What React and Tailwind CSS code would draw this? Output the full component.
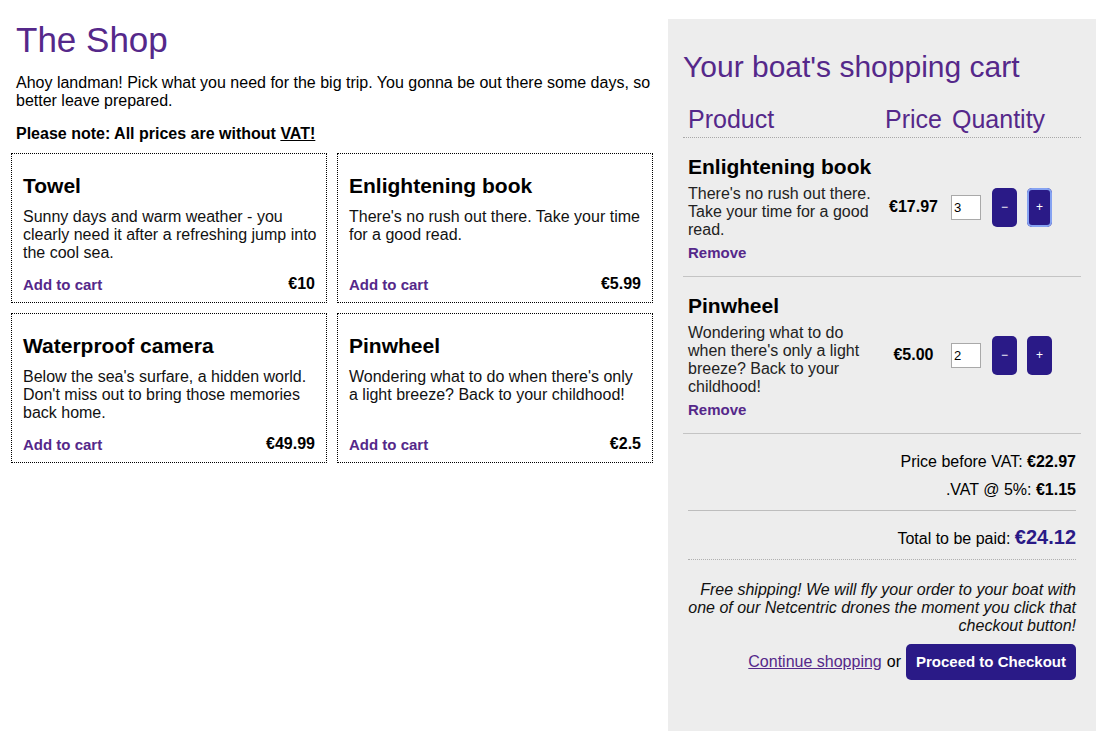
import React from 'react';

const products = [
  { name: 'Towel', desc: 'Sunny days and warm weather - you clearly need it after a refreshing jump into the cool sea.', price: '€10' },
  { name: 'Enlightening book', desc: "There's no rush out there. Take your time for a good read.", price: '€5.99' },
  { name: 'Waterproof camera', desc: "Below the sea's surfare, a hidden world. Don't miss out to bring those memories back home.", price: '€49.99' },
  { name: 'Pinwheel', desc: "Wondering what to do when there's only a light breeze? Back to your childhood!", price: '€2.5' },
];

const cartItems = [
  { name: 'Enlightening book', desc: "There's no rush out there. Take your time for a good read.", price: '€17.97', qty: '3', focused: true },
  { name: 'Pinwheel', desc: "Wondering what to do when there's only a light breeze? Back to your childhood!", price: '€5.00', qty: '2', focused: false },
];

function ProductCard({ product }) {
  return (
    <div className="flex flex-col h-[150px] border border-dotted border-black pt-[20px] px-[11px] pb-[8px]">
      <h3 className="text-[21px] leading-[24px] font-bold text-black">{product.name}</h3>
      <p className="mt-[10px] mr-[-4px] text-[16px] leading-[18px] text-[#111]">{product.desc}</p>
      <div className="mt-auto flex items-end justify-between">
        <a href="#" className="text-[15px] leading-[18px] font-bold text-[#55288a]">Add to cart</a>
        <span className="text-[16px] leading-[18px] font-bold text-black mb-[1px]">{product.price}</span>
      </div>
    </div>
  );
}

function CartRow({ item }) {
  return (
    <div className="flex items-center border-b border-[#c4c4c4]">
      <div className="w-[197px] flex-none px-[5px] pt-[17px] pb-[14px]">
        <h3 className="text-[21px] leading-[24px] font-bold text-black">{item.name}</h3>
        <p className="mt-[6px] text-[16px] leading-[18px] text-[#222]">{item.desc}</p>
        <a href="#" className="block mt-[5px] text-[15px] leading-[18px] font-bold text-[#55288a]">Remove</a>
      </div>
      <div className="w-[67px] flex-none text-center text-[16px] leading-[18px] font-bold text-black">{item.price}</div>
      <div className="flex items-center pl-[4px]">
        <input
          readOnly
          value={item.qty}
          className="w-[30px] h-[25px] bg-white border border-[#a9a9a9] px-[2px] text-[13px] text-black outline-none"
        />
        <button className="ml-[11px] w-[25px] h-[39px] rounded-[5px] bg-[#2a1a87] text-white text-[12px] leading-none">−</button>
        <button
          className={
            item.focused
              ? 'ml-[10px] w-[25px] h-[39px] rounded-[5px] bg-[#2a1a87] text-white text-[12px] leading-none ring-2 ring-inset ring-[#86a3f2]'
              : 'ml-[10px] w-[25px] h-[39px] rounded-[5px] bg-[#2a1a87] text-white text-[12px] leading-none'
          }
        >
          +
        </button>
      </div>
    </div>
  );
}

export default function App() {
  return (
    <div className="flex w-[1112px] min-h-[743px] bg-white text-black font-['Liberation_Sans',Arial,sans-serif]">
      <main className="w-[668px] flex-none pt-[20px] pl-[11px] pr-[15px]">
        <h1 className="pl-[5px] text-[35px] leading-[40px] text-[#55288a]">The Shop</h1>
        <p className="pl-[5px] mt-[14px] text-[16px] leading-[18px]">
          Ahoy landman! Pick what you need for the big trip. You gonna be out there some days, so better leave prepared.
        </p>
        <p className="pl-[5px] mt-[15px] text-[16px] leading-[18px] font-bold">
          Please note: All prices are without <span className="underline">VAT!</span>
        </p>
        <div className="mt-[10px] grid grid-cols-2 gap-x-[10px] gap-y-[10px] w-[642px]">
          {products.map((p) => (
            <ProductCard key={p.name} product={p} />
          ))}
        </div>
      </main>

      <aside className="w-[428px] h-[712px] flex-none mt-[19px] bg-[#ededed] pt-[31px] px-[15px]">
        <h2 className="text-[30px] leading-[34px] text-[#55288a]">Your boat's shopping cart</h2>

        <div className="mt-[21px] flex pb-[4px] border-b border-dotted border-[#a8a8a8] text-[25px] leading-[28px] text-[#55288a]">
          <div className="w-[197px] flex-none pl-[5px]">Product</div>
          <div className="w-[67px] flex-none pl-[5px]">Price</div>
          <div className="pl-[5px]">Quantity</div>
        </div>

        {cartItems.map((item) => (
          <CartRow key={item.name} item={item} />
        ))}

        <div className="mx-[5px] text-[16px] leading-[18px] text-right">
          <div className="pt-[19px] pb-[11px] border-b border-[#bdbdbd]">
            <div>
              Price before VAT: <span className="font-bold">€22.97</span>
            </div>
            <div className="mt-[10px]">
              .VAT @ 5%: <span className="font-bold">€1.15</span>
            </div>
          </div>
          <div className="pt-[15px] pb-[10px] border-b border-dotted border-[#b0b0b0] flex justify-end items-baseline">
            <span>Total to be paid:&nbsp;</span>
            <span className="text-[20px] leading-[23px] font-bold text-[#2a1a87]">€24.12</span>
          </div>
          <p className="mt-[21px] italic text-[#111]">
            Free shipping! We will fly your order to your boat with one of our Netcentric drones the moment you click that checkout button!
          </p>
          <div className="mt-[9px] flex items-center justify-end">
            <a href="#" className="underline text-[#55288a]">Continue shopping</a>
            <span className="mx-[5px]">or</span>
            <button className="h-[36px] px-[10px] rounded-[5px] bg-[#2a1a87] text-white text-[15px] font-bold">
              Proceed to Checkout
            </button>
          </div>
        </div>
      </aside>
    </div>
  );
}
